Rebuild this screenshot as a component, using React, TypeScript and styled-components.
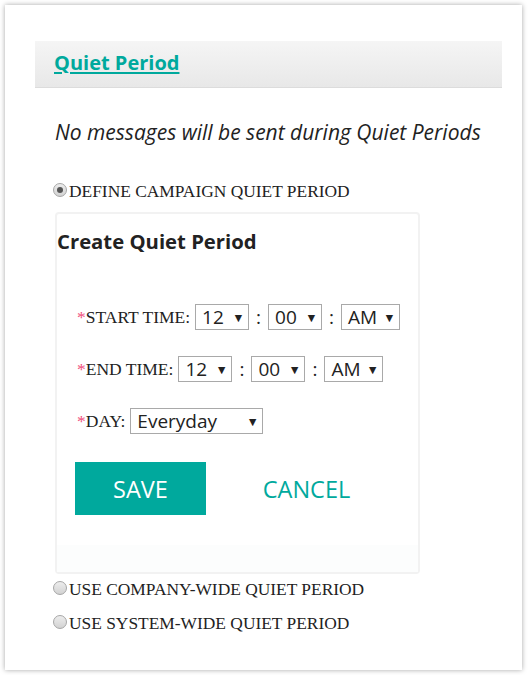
import React from 'react';
import styled, { createGlobalStyle } from 'styled-components';

const teal = '#00a99d';
const sans = `'Open Sans', 'Noto Sans', sans-serif`;
const serif = `'Liberation Serif', 'Times New Roman', serif`;

const GlobalStyle = createGlobalStyle`
  html, body {
    margin: 0;
    padding: 0;
    background: #ffffff;
  }
  body {
    font-family: ${sans};
    color: #222;
  }
`;

type SelectProps = { value: string; width: number };

const FakeSelect = ({ value, width }: SelectProps) => (
  <SelectBox style={{ width }}>
    <SelectValue>{value}</SelectValue>
    <Caret>▼</Caret>
  </SelectBox>
);

const Radio = ({ checked, label }: { checked?: boolean; label: string }) => (
  <RadioRow>
    <RadioDot $checked={checked} />
    <RadioLabel>{label}</RadioLabel>
  </RadioRow>
);

export default function App() {
  return (
    <>
      <GlobalStyle />
      <Card>
        {/* Section header */}
        <HeaderBar>
          <HeaderLink href="#">Quiet Period</HeaderLink>
        </HeaderBar>

        <Body>
          <Note>No messages will be sent during Quiet Periods</Note>

          <Radio checked label="DEFINE CAMPAIGN QUIET PERIOD" />

          {/* Create form */}
          <FormBox>
            <FormTitle>Create Quiet Period</FormTitle>
            <Rows>
              <FieldRow>
                <Label>
                  <Req>*</Req>START TIME:
                </Label>
                <FakeSelect value="12" width={54} />
                <Sep>:</Sep>
                <FakeSelect value="00" width={54} />
                <Sep>:</Sep>
                <FakeSelect value="AM" width={59} />
              </FieldRow>
              <FieldRow>
                <Label>
                  <Req>*</Req>END TIME:
                </Label>
                <FakeSelect value="12" width={54} />
                <Sep>:</Sep>
                <FakeSelect value="00" width={54} />
                <Sep>:</Sep>
                <FakeSelect value="AM" width={59} />
              </FieldRow>
              <FieldRow>
                <Label>
                  <Req>*</Req>DAY:
                </Label>
                <FakeSelect value="Everyday" width={133} />
              </FieldRow>
            </Rows>
            <Actions>
              <SaveButton>SAVE</SaveButton>
              <CancelButton>CANCEL</CancelButton>
            </Actions>
            <FormFooter />
          </FormBox>

          <OtherOptions>
            <Radio label="USE COMPANY-WIDE QUIET PERIOD" />
            <Radio label="USE SYSTEM-WIDE QUIET PERIOD" />
          </OtherOptions>
        </Body>
      </Card>
    </>
  );
}

const Card = styled.div`
  box-sizing: border-box;
  margin: 5px;
  width: 517px;
  height: 665px;
  padding: 36px 20px 0 30px;
  background: #fff;
  box-shadow: 0 0 5px rgba(0, 0, 0, 0.35);
`;

const HeaderBar = styled.div`
  box-sizing: border-box;
  height: 47px;
  display: flex;
  align-items: center;
  padding-left: 19px;
  background: linear-gradient(to bottom, #f5f5f5, #e8e8e8);
  border-bottom: 1px solid #dcdcdc;
`;

const HeaderLink = styled.a`
  font-family: ${sans};
  font-size: 20px;
  font-weight: 700;
  color: ${teal};
  text-decoration: underline;
  text-underline-offset: 2px;
  margin-top: -4px;
`;

const Body = styled.div`
  display: flex;
  flex-direction: column;
  align-items: flex-start;
`;

const Note = styled.p`
  margin: 31px 0 36px 20px;
  font-family: ${sans};
  font-style: italic;
  font-size: 21px;
  line-height: 26px;
  color: #222;
  white-space: nowrap;
`;

const RadioRow = styled.label`
  display: flex;
  align-items: center;
  height: 20px;
  margin-left: 18px;
`;

const RadioDot = styled.span<{ $checked?: boolean }>`
  position: relative;
  box-sizing: border-box;
  width: 14px;
  height: 14px;
  border-radius: 50%;
  border: 1px solid #a6a6a6;
  background: linear-gradient(to bottom, #ededed, #d2d2d2);
  margin-top: -2px;
  &::after {
    content: '';
    display: ${p => (p.$checked ? 'block' : 'none')};
    position: absolute;
    left: 3px;
    top: 3px;
    width: 6px;
    height: 6px;
    border-radius: 50%;
    background: #555;
  }
`;

const RadioLabel = styled.span`
  font-family: ${serif};
  font-size: 17.4px;
  color: #222;
  margin-left: 2px;
`;

const FormBox = styled.div`
  box-sizing: border-box;
  width: 365px;
  height: 362px;
  margin: 11px 0 0 20px;
  border: 2px solid #f2f2f2;
  border-radius: 4px;
  background: #fff;
  display: flex;
  flex-direction: column;
`;

const FormTitle = styled.h3`
  margin: 15px 0 0 0;
  font-family: ${sans};
  font-size: 20.3px;
  font-weight: 700;
  line-height: 24px;
  color: #222;
`;

const Rows = styled.div`
  display: flex;
  flex-direction: column;
  gap: 26px;
  margin-top: 51px;
  padding-left: 20px;
`;

const FieldRow = styled.div`
  display: flex;
  align-items: center;
  height: 26px;
`;

const Label = styled.span`
  font-family: ${serif};
  font-size: 17.5px;
  color: #222;
  margin-right: 5px;
`;

const Req = styled.span`
  color: #f0507a;
`;

const SelectBox = styled.div`
  box-sizing: border-box;
  height: 26px;
  display: flex;
  align-items: center;
  justify-content: space-between;
  padding: 0 6px 0 6px;
  border: 1px solid #a9a9a9;
  background: #fff;
`;

const SelectValue = styled.span`
  font-family: ${sans};
  font-size: 19px;
  line-height: 24px;
  color: #222;
`;

const Caret = styled.span`
  font-family: 'DejaVu Sans', sans-serif;
  font-size: 9.5px;
  color: #222;
`;

const Sep = styled.span`
  width: 19px;
  text-align: center;
  font-family: ${sans};
  font-size: 19px;
  color: #222;
`;

const Actions = styled.div`
  display: flex;
  align-items: center;
  margin-top: 28px;
  padding-left: 18px;
`;

const SaveButton = styled.button`
  width: 131px;
  height: 53px;
  border: none;
  background: ${teal};
  color: #fff;
  font-family: ${sans};
  font-size: 23.5px;
  cursor: pointer;
`;

const CancelButton = styled.button`
  width: 131px;
  height: 53px;
  margin-left: 35px;
  border: none;
  background: transparent;
  color: ${teal};
  font-family: ${sans};
  font-size: 23.5px;
  cursor: pointer;
`;

const FormFooter = styled.div`
  flex: 1;
  margin-top: 30px;
  background: #fcfdfd;
`;

const OtherOptions = styled.div`
  display: flex;
  flex-direction: column;
  gap: 14px;
  margin-top: 5px;
`;
